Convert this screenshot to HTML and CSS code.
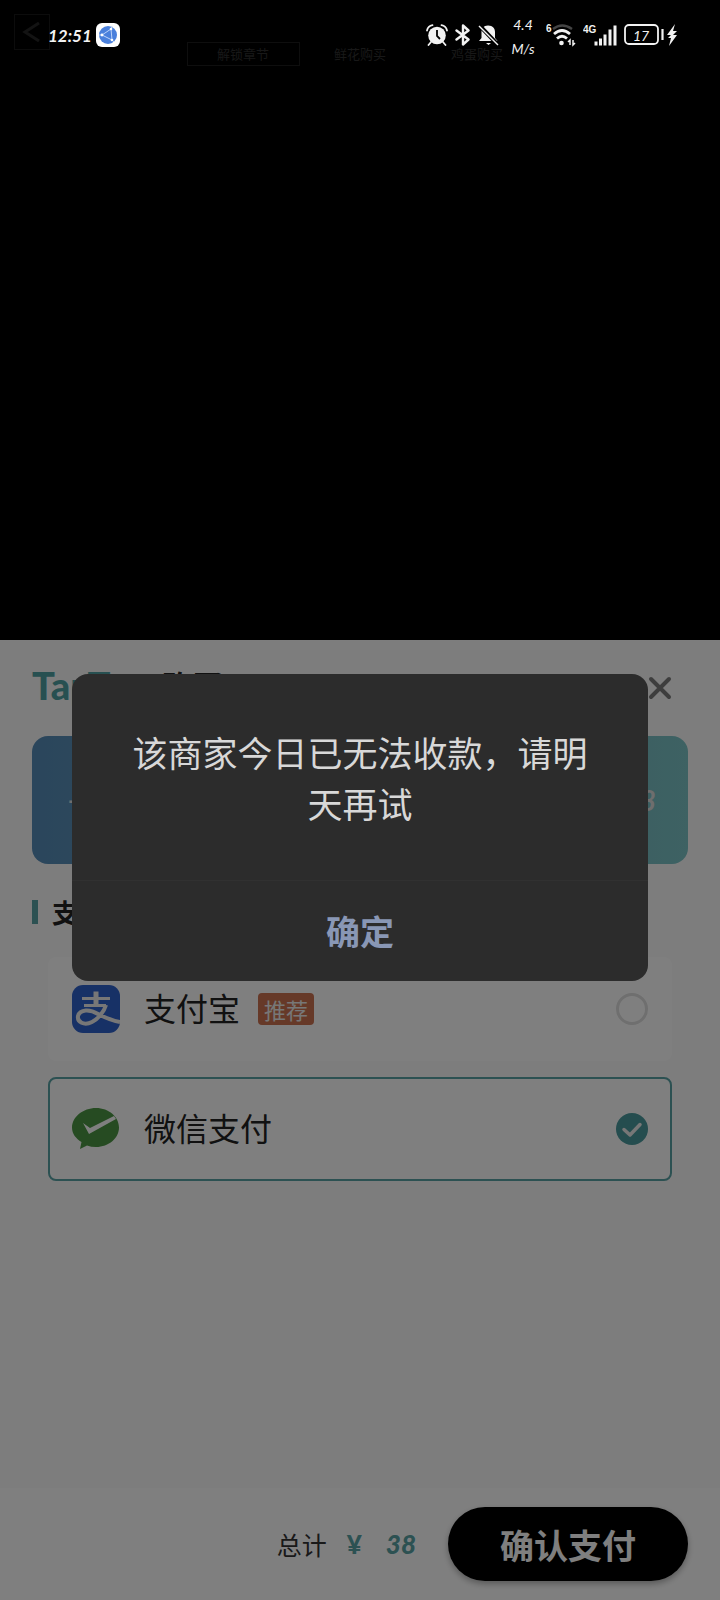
FILE: index.html
```html
<!DOCTYPE html>
<html lang="zh-CN">
<head>
	<meta charset="UTF-8">
	<meta name="viewport" content="width=device-width, initial-scale=1.0">
	<title>确认支付</title>
	<link rel="stylesheet" href="styles.css">
</head>
<body>

	<div class="app">

		<header class="status-bar">
			<span class="time">12:51</span>
			<svg class="app-icon" width="24" height="24" viewBox="0 0 24 24">
				<rect width="24" height="24" rx="6" fill="#fff"/>
				<circle cx="12" cy="12" r="9" fill="#4a80dc"/>
				<path d="M6 12L15 6L16 17Z M3 12h3 M15 6l1-3 M16 17l2 2" fill="none" stroke="#bcd3fa" stroke-width="1"/>
				<circle cx="6" cy="12" r="1.4" fill="#fff"/>
				<circle cx="15" cy="6" r="1.3" fill="#fff"/>
				<circle cx="16" cy="17" r="1.3" fill="#fff"/>
			</svg>

			<div class="status-icons">
				<!-- alarm -->
				<svg width="22" height="22" viewBox="0 0 22 22">
					<circle cx="11" cy="11.5" r="8.8" fill="#f2f2f2"/>
					<path d="M1 6.500Q2 2 6.500 1.200M21 6.500Q20 2 15.500 1.200M5 18l-2.500 3M17 18l2.500 3" fill="none" stroke="#f2f2f2" stroke-width="1.800" stroke-linecap="round"/>
					<path d="M11 6v6l3 3" fill="none" stroke="#000" stroke-width="1.800"/>
				</svg>
				<!-- bluetooth -->
				<svg width="16" height="22" viewBox="0 0 16 22">
					<path d="M1.500 6.500L13.500 15.500L8 20.500V1.500L13.500 6.500L1.500 15.500" fill="none" stroke="#f2f2f2" stroke-width="2.400" stroke-linejoin="round" stroke-linecap="round"/>
				</svg>
				<!-- muted bell -->
				<svg width="22" height="22" viewBox="0 0 22 22">
					<path d="M10 1.500c5 0 7 3 7 6.500v6l2.500 3H1l2.500-3V8c0-3.500 2-6.500 6.500-6.500z" fill="#f2f2f2"/>
					<path d="M8 19h5l-2.500 2z" fill="#f2f2f2"/>
					<path d="M2 2L20 21" stroke="#000" stroke-width="4"/>
					<path d="M1 2L20 21" stroke="#f2f2f2" stroke-width="1.500"/>
				</svg>
				<div class="speed">
					<span>4.4</span>
					<span>M/s</span>
				</div>
				<!-- wifi -->
				<svg width="30" height="24" viewBox="0 0 30 24">
					<text class="net" x="0" y="9">6</text>
					<path d="M7 6Q16-1 26 6" fill="none" stroke="#444" stroke-width="2.500"/>
					<path d="M8 11Q16 4 24 11M11 15.500Q16 11 21 15.500" fill="none" stroke="#f2f2f2" stroke-width="2.800"/>
					<circle cx="15.500" cy="20" r="2.300" fill="#f2f2f2"/>
					<path d="M24 22v-5l-2 2M27 17v5l2-2" fill="none" stroke="#f2f2f2" stroke-width="1.500"/>
				</svg>
				<!-- mobile signal -->
				<svg width="34" height="24" viewBox="0 0 34 24">
					<text class="net" x="0" y="10">4G</text>
					<path d="M13 22.500v-4M17.500 22.500v-7M22 22.500v-11M27 22.500v-16M32 22.500v-20" fill="none" stroke="#f2f2f2" stroke-width="3"/>
				</svg>
				<!-- battery -->
				<svg width="54" height="24" viewBox="0 0 54 24">
					<rect x="1" y="2" width="33" height="19" rx="4" fill="none" stroke="#f2f2f2" stroke-width="1.800"/>
					<text class="level" x="17" y="18">17</text>
					<path d="M38.500 6v11" stroke="#f2f2f2" stroke-width="2.200"/>
					<path d="M51 1L43 12h4l-3 3h3l-2 8 8-11h-4l4-4h-4z" fill="#f2f2f2"/>
				</svg>
			</div>
		</header>

		<div class="scene">
			<button class="back" aria-label="返回">
				<svg width="20" height="20" viewBox="0 0 20 20">
					<path d="M17 1L3 10l14 9" fill="none" stroke="#262626" stroke-width="3"/>
				</svg>
			</button>
			<nav class="tabs">
				<button class="tab active">解锁章节</button>
				<button class="tab">鲜花购买</button>
				<button class="tab">鸡蛋购买</button>
			</nav>
		</div>

		<main class="sheet">
			<div class="sheet-header">
				<span class="logo">TapTap</span>
				<h1>购买</h1>
				<button class="close" aria-label="关闭">
					<svg width="24" height="24" viewBox="0 0 24 24">
						<path d="M3 3L21 21M21 3L3 21" stroke="#7d7d7d" stroke-width="4" stroke-linecap="round"/>
					</svg>
				</button>
			</div>

			<div class="product">
				<span>一</span>
				<span class="product-price">¥ 38</span>
			</div>

			<h2>支付方式</h2>

			<div class="methods">
				<label class="method">
					<svg class="method-icon" width="48" height="48" viewBox="0 0 48 48">
						<rect width="48" height="48" rx="11" fill="#2f62cc"/>
						<path d="M10 13.500H38M12 20.500H34" stroke="#eee" stroke-width="3"/>
						<path d="M24 6.500V20" stroke="#eee" stroke-width="5"/>
						<path d="M34 20C32 27 26 34 20 37C12 41 5 37 6 31C8 24 18 24 26 29C34 33 41 36 48 37" fill="none" stroke="#eee" stroke-width="4"/>
					</svg>
					<span class="method-name">支付宝</span>
					<span class="badge">推荐</span>
					<input type="radio" name="method" value="alipay">
				</label>

				<label class="method selected">
					<svg class="method-icon" width="48" height="48" viewBox="0 0 48 48">
						<path d="M24 3C37 3 47 12 47 22.500S37 42 24 42Q19 42 15 40.500L8 44L9.500 37C4 33.500 0 29 0 22.500C0 12 11 3 24 3z" fill="#4c9644"/>
						<path d="M11 18L18 23L42 11L44 14L17 29z" fill="#fff"/>
					</svg>
					<span class="method-name">微信支付</span>
					<input type="radio" name="method" value="wechat" checked>
				</label>
			</div>

			<div class="pay-bar">
				<span class="total-label">总计</span>
				<span class="total">¥</span>
				<span class="total amount">38</span>
				<button class="pay">确认支付</button>
			</div>
		</main>

		<div class="mask">
			<div class="dialog" role="alertdialog" aria-labelledby="message">
				<p id="message">该商家今日已无法收款，请明天再试</p>
				<button class="confirm">确定</button>
			</div>
		</div>

	</div>

</body>
</html>
```

FILE: styles.css
```css
* {
	margin: 0;
	padding: 0;
	box-sizing: border-box;
}

body {
	font-family: "Noto Sans CJK SC", sans-serif;
	background-color: #000;
}

button {
	font-family: inherit;
	border: none;
	background: none;
	cursor: pointer;
}

svg {
	display: block;
	flex-shrink: 0;
}

.app {
	position: relative;
	min-height: 100vh;
	display: flex;
	flex-direction: column;
}

/* status bar */

.status-bar {
	position: absolute;
	top: 0;
	left: 0;
	right: 0;
	z-index: 3;
	height: 70px;
	padding: 0 42px 0 48px;
	display: flex;
	align-items: center;
	gap: 4px;
	color: #f2f2f2;
}

.time {
	font-family: Lato, sans-serif;
	font-size: 17px;
	font-style: italic;
	font-weight: 700;
}

.status-icons {
	margin-left: auto;
	display: flex;
	align-items: center;
	gap: 7px;
}

.speed {
	display: flex;
	flex-direction: column;
	width: 32px;
	padding-top: 4px;
	text-align: center;
	font-family: Lato, sans-serif;
	font-size: 14px;
	font-style: italic;
	line-height: 24px;
}

.net {
	font-family: "Liberation Sans", sans-serif;
	font-size: 10px;
	font-weight: 700;
	fill: #f2f2f2;
}

.level {
	font-family: Lato, sans-serif;
	font-size: 14px;
	font-style: italic;
	text-anchor: middle;
	fill: #f2f2f2;
}

/* page behind the sheet */

.scene {
	height: 40vh;
	padding: 14px;
	display: flex;
	align-items: flex-start;
}

.back {
	width: 36px;
	height: 36px;
	border: 1px solid #181818;
	display: flex;
	justify-content: center;
	align-items: center;
}

.tabs {
	flex: 1;
	margin-right: 36px;
	padding-top: 28px;
	display: flex;
	justify-content: center;
	gap: 4px;
}

.tab {
	width: 113px;
	height: 24px;
	font-size: 13px;
	line-height: 20px;
	color: #303030;
	border: 1px solid transparent;
}

.tab.active {
	border-color: #1c1c1c;
}

/* payment sheet */

.sheet {
	flex: 1;
	background-color: #fafafa;
	display: flex;
	flex-direction: column;
}

.sheet-header {
	height: 96px;
	padding: 0 48px 0 32px;
	display: flex;
	align-items: center;
}

.logo {
	width: 130px;
	padding-bottom: 6px;
	font-family: Lato, sans-serif;
	font-size: 38px;
	font-weight: 900;
	line-height: 40px;
	color: #4fa0a3;
}

.sheet-header h1 {
	padding-bottom: 8px;
	font-size: 30px;
	line-height: 40px;
	color: #222;
}

.close {
	margin-left: auto;
}

.product {
	height: 128px;
	margin: 0 32px;
	padding: 0 32px 0 36px;
	display: flex;
	justify-content: space-between;
	align-items: center;
	border-radius: 16px;
	background: linear-gradient(90deg, #568cb8, #7cc4c6);
	font-size: 30px;
	color: #ddd;
}

.product-price {
	font-family: Lato, sans-serif;
	font-size: 28px;
	font-weight: 700;
	font-style: italic;
}

.sheet h2 {
	margin: 36px 32px 0;
	padding-left: 14px;
	border-left: 6px solid #58a2a5;
	font-size: 26px;
	line-height: 24px;
	color: #222;
}

.methods {
	padding: 33px 48px;
	display: flex;
	flex-direction: column;
	gap: 16px;
}

.method {
	height: 104px;
	padding: 0 22px;
	display: flex;
	align-items: center;
	border: 2px solid transparent;
	border-radius: 8px;
	background-color: #fff;
	cursor: pointer;
}

.method.selected {
	border-color: #58a2a5;
}

.method-name {
	margin-left: 24px;
	padding-bottom: 4px;
	font-size: 32px;
	line-height: 48px;
	color: #222;
}

.badge {
	margin-left: 18px;
	padding: 0 6px;
	border-radius: 4px;
	background-color: #cc7350;
	font-size: 22px;
	line-height: 32px;
	color: #eee;
}

.method input {
	appearance: none;
	width: 32px;
	height: 32px;
	margin-left: auto;
	border: 3px solid #dedede;
	border-radius: 50%;
}

.method input:checked {
	border: none;
	background: #4b9b9e url("data:image/svg+xml,%3Csvg xmlns='http://www.w3.org/2000/svg' viewBox='0 0 32 32'%3E%3Cpath d='M8 16.500L14 22L24 11.500' fill='none' stroke='%23eee' stroke-width='3.500' stroke-linecap='round' stroke-linejoin='round'/%3E%3C/svg%3E");
}

.pay-bar {
	margin-top: auto;
	padding: 19px 32px;
	display: flex;
	justify-content: flex-end;
	align-items: center;
	background-color: #fff;
}

.total-label {
	font-size: 25px;
	color: #333;
}

.total {
	margin-left: 20px;
	font-family: Lato, sans-serif;
	font-size: 26px;
	font-weight: 900;
	color: #58a2a5;
}

.total.amount {
	margin-left: 24px;
	font-style: italic;
}

.pay {
	width: 240px;
	height: 74px;
	margin-left: 32px;
	border-radius: 37px;
	background-color: #000;
	box-shadow: 0 3px 6px rgba(0, 0, 0, 0.3);
	font-size: 34px;
	font-weight: 700;
	color: #fff;
}

/* dialog */

.mask {
	position: absolute;
	inset: 0;
	z-index: 2;
	padding: 54px 10% 0;
	display: flex;
	align-items: center;
	background-color: rgba(0, 0, 0, 0.5);
}

.dialog {
	flex: 1;
	border-radius: 16px;
	background-color: #2c2c2c;
	overflow: hidden;
}

.dialog p {
	padding: 52px 56px;
	font-size: 35px;
	line-height: 51px;
	text-align: center;
	color: #d8d8d8;
}

.confirm {
	width: 100%;
	height: 101px;
	border-top: 1px solid #313131;
	font-size: 34px;
	font-weight: 700;
	color: #8997b5;
}
```
